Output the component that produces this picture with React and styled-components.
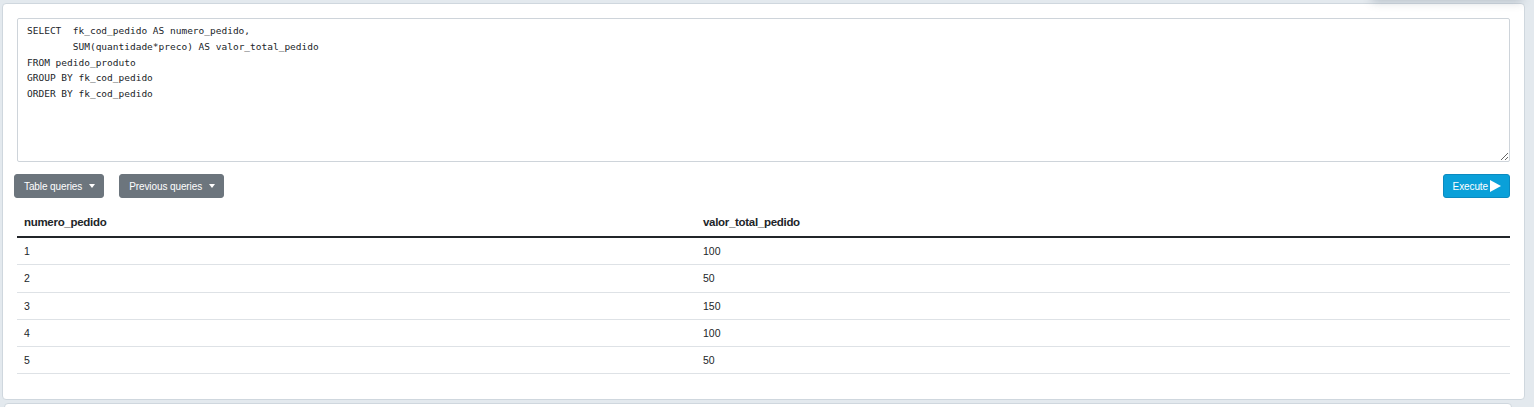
import React from 'react';
import styled, { createGlobalStyle } from 'styled-components';

const GlobalStyle = createGlobalStyle`
  html, body {
    margin: 0;
    padding: 0;
    background: #e3e9ee;
    font-family: "Liberation Sans", Arial, sans-serif;
    color: #212529;
  }
`;

const Page = styled.div`
  position: relative;
  padding: 3px 9px 0 2px;
  height: 407px;
  overflow: hidden;
  box-sizing: border-box;
`;

const TopShadow = styled.div`
  position: absolute;
  top: -30px;
  left: 1372px;
  width: 150px;
  height: 30px;
  box-shadow: 0 2px 10px rgba(60, 80, 100, 0.25);
  background: #e3e9ee;
`;

const Card = styled.section`
  background: #fff;
  border: 1px solid #cfd7de;
  border-radius: 4px;
  padding: 14px 14px 25px 11px;
`;

const NextCard = styled.div`
  margin: 3px 13px 0 2px;
  height: 20px;
  background: #fff;
  border: 1px solid #cfd7de;
  border-radius: 4px;
`;

const Editor = styled.textarea`
  display: block;
  box-sizing: border-box;
  width: calc(100% - 3px);
  height: 144px;
  margin: 0 0 0 3px;
  padding: 4px 9px;
  border: 1px solid #ced4da;
  border-radius: 2px;
  font-family: "DejaVu Sans Mono", "Liberation Mono", monospace;
  font-size: 9.5px;
  line-height: 15.8px;
  color: #212529;
  resize: vertical;
  outline: none;
`;

const Toolbar = styled.div`
  display: flex;
  align-items: center;
  gap: 15px;
  margin-top: 12px;
`;

const Button = styled.button`
  display: inline-flex;
  align-items: center;
  height: 24px;
  padding: 0 8px 0 9px;
  border: 1px solid ${p => (p.primary ? '#0b8ac0' : '#6c757d')};
  border-radius: 3px;
  background: ${p => (p.primary ? '#0aa0d9' : '#6c757d')};
  color: #fff;
  font-family: "Liberation Sans", Arial, sans-serif;
  font-size: 10px;
  letter-spacing: -0.1px;
  cursor: pointer;
  margin-left: ${p => (p.primary ? 'auto' : '0')};
`;

const Caret = styled.span`
  display: inline-block;
  margin-left: 7px;
  border-top: 4px solid #fff;
  border-left: 3.5px solid transparent;
  border-right: 3.5px solid transparent;
`;

const Play = styled.svg`
  margin-left: 2px;
`;

const Table = styled.table`
  width: calc(100% - 3px);
  margin: 10px 0 0 3px;
  border-collapse: collapse;
`;

const Th = styled.th`
  height: 28px;
  padding: 0 7px;
  text-align: left;
  font-size: 11.5px;
  font-weight: 700;
  letter-spacing: -0.3px;
  color: #212529;
  border-bottom: 2px solid #212529;
  width: ${p => p.width || 'auto'};
`;

const Td = styled.td`
  height: 26.3px;
  padding: 0 7px;
  font-size: 10.5px;
  color: #212529;
  border-bottom: 1px solid #dee2e6;
`;

const rows = [
  [1, 100],
  [2, 50],
  [3, 150],
  [4, 100],
  [5, 50],
];

const sql = `SELECT  fk_cod_pedido AS numero_pedido,
        SUM(quantidade*preco) AS valor_total_pedido
FROM pedido_produto
GROUP BY fk_cod_pedido
ORDER BY fk_cod_pedido`;

export default function App() {
  return (
    <Page>
      <GlobalStyle />
      <TopShadow />
      <Card>
        <Editor defaultValue={sql} spellCheck={false} />
        <Toolbar>
          <Button>Table queries<Caret /></Button>
          <Button>Previous queries<Caret /></Button>
          <Button primary>
            Execute
            <Play width="11" height="12" viewBox="0 0 11 12">
              <path d="M0 0 L11 6 L0 12 Z" fill="#fff" />
            </Play>
          </Button>
        </Toolbar>
        <Table>
          <thead>
            <tr>
              <Th width="665px">numero_pedido</Th>
              <Th>valor_total_pedido</Th>
            </tr>
          </thead>
          <tbody>
            {rows.map(([n, v]) => (
              <tr key={n}>
                <Td>{n}</Td>
                <Td>{v}</Td>
              </tr>
            ))}
          </tbody>
        </Table>
      </Card>
      <NextCard />
    </Page>
  );
}
